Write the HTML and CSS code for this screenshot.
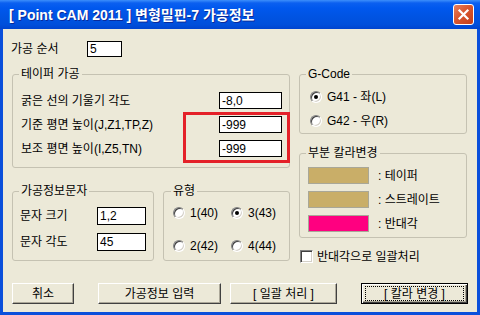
FILE: index.html
```html
<!DOCTYPE html>
<html lang="ko">
  <head>
    <meta charset="UTF-8" />
    <meta name="viewport" content="width=device-width, initial-scale=1.0" />
    <title>가공정보</title>
    <link rel="stylesheet" href="styles.css">
  </head>
  <body>
    <div class="window">
      <!-- 타이틀바 -->
      <div class="titlebar">
        <span class="title">[ Point CAM 2011 ] 변형밀핀-7 가공정보</span>
        <div class="close">
          <svg width="13" height="13" viewBox="0 0 13 13">
            <path d="M2.5 2.5 L10.5 10.5 M10.5 2.5 L2.5 10.5" stroke="#fff" stroke-width="2.2" stroke-linecap="square" />
          </svg>
        </div>
      </div>

      <div class="client">
        <div class="order-row">
          <span class="order-label">가공 순서</span>
          <div class="edit order-edit">5</div>
        </div>

        <div class="main">
          <div class="col-left">
            <fieldset class="grp taper">
              <legend>테이퍼 가공</legend>
              <div class="field-row">
                <span>굵은 선의 기울기 각도</span>
                <div class="edit taper-edit">-8,0</div>
              </div>
              <div class="field-row">
                <span>기준 평면 높이(J,Z1,TP,Z)</span>
                <div class="edit taper-edit">-999</div>
              </div>
              <div class="field-row">
                <span>보조 평면 높이(I,Z5,TN)</span>
                <div class="edit taper-edit">-999</div>
              </div>
            </fieldset>

            <div class="grp-row">
              <fieldset class="grp text-grp">
                <legend>가공정보문자</legend>
                <div class="text-row">
                  <span class="text-label">문자 크기</span>
                  <div class="edit text-edit">1,2</div>
                </div>
                <div class="text-row">
                  <span class="text-label">문자 각도</span>
                  <div class="edit text-edit">45</div>
                </div>
              </fieldset>

              <fieldset class="grp type-grp">
                <legend>유형</legend>
                <div class="type-grid">
                  <label class="opt"><span class="radio"></span>1(40)</label>
                  <label class="opt"><span class="radio on"></span>3(43)</label>
                  <label class="opt"><span class="radio"></span>2(42)</label>
                  <label class="opt"><span class="radio"></span>4(44)</label>
                </div>
              </fieldset>
            </div>
          </div>

          <div class="col-right">
            <fieldset class="grp gcode">
              <legend>G-Code</legend>
              <label class="opt"><span class="radio on"></span>G41 - 좌(L)</label>
              <label class="opt"><span class="radio"></span>G42 - 우(R)</label>
            </fieldset>

            <fieldset class="grp colors">
              <legend>부분 칼라변경</legend>
              <div class="color-row">
                <span class="swatch tan"></span><span>: 테이퍼</span>
              </div>
              <div class="color-row">
                <span class="swatch tan"></span><span>: 스트레이트</span>
              </div>
              <div class="color-row">
                <span class="swatch pink"></span><span>: 반대각</span>
              </div>
            </fieldset>

            <label class="check-row"><span class="checkbox"></span>반대각으로 일괄처리</label>
          </div>
        </div>

        <div class="buttons">
          <div class="btn btn-cancel">취소</div>
          <div class="btn btn-input">가공정보 입력</div>
          <div class="btn btn-batch">[ 일괄 처리 ]</div>
          <div class="btn btn-color default"><span class="focus">[ 칼라 변경 ]</span></div>
        </div>
      </div>

      <!-- 빨간 표시 박스 -->
      <div class="mark"></div>
    </div>
  </body>
</html>
```

FILE: styles.css
```css
* {
  margin: 0;
  padding: 0;
  box-sizing: border-box;
}

body {
  width: 480px;
  height: 315px;
  overflow: hidden;
  font-family: "Liberation Sans", "Noto Sans CJK KR", sans-serif;
  font-size: 12px;
  line-height: 14px;
  color: #000;
}

.window {
  position: relative;
  width: 480px;
  height: 315px;
  display: flex;
  flex-direction: column;
}

/* 타이틀바 */
.titlebar {
  height: 29px;
  display: flex;
  align-items: center;
  justify-content: space-between;
  padding: 0 6px 0 9px;
  background: linear-gradient(to bottom, #3d8ffb 0, #0b60f0 3px, #0058ee 8px, #0054e3 55%, #004fdb 85%, #0044cf 100%);
}

.title {
  font-size: 14px;
  font-weight: bold;
  color: #fff;
  text-shadow: 1px 1px #0a2a9a;
  white-space: nowrap;
}

.close {
  width: 21px;
  height: 21px;
  border: 1px solid #fff;
  border-radius: 3px;
  background: linear-gradient(135deg, #e8805e 0, #d9572f 45%, #c43e1a 100%);
  display: flex;
  align-items: center;
  justify-content: center;
}

/* 본문 */
.client {
  flex: 1;
  display: flex;
  flex-direction: column;
  background: #ece9d8;
  border: 3px solid #0a4fdb;
  border-top: 0;
  padding: 12px 0 8px 9px;
}

.order-row {
  display: flex;
  align-items: center;
  height: 16px;
  margin-left: -1px;
}

.order-label {
  width: 76px;
}

.edit {
  background: #fff;
  border: 1px solid #000;
  padding-left: 2px;
  display: flex;
  align-items: center;
}

.order-edit {
  width: 35px;
  height: 16px;
}

.main {
  display: flex;
  gap: 9px;
  margin-top: 10px;
}

.col-left {
  width: 278px;
}

.col-right {
  width: 168px;
}

/* 그룹박스 */
.grp {
  border: 1px solid #c5c2b2;
  border-radius: 3px;
  min-width: 0;
}

.grp legend {
  padding: 0 2px;
  line-height: 14px;
}

.taper {
  padding: 11px 7px 10px 8px;
  display: flex;
  flex-direction: column;
  gap: 7px;
}

.taper legend {
  margin-left: -2px;
}

.field-row {
  display: flex;
  justify-content: space-between;
  align-items: center;
  height: 17px;
}

.taper-edit {
  width: 63px;
  height: 17px;
}

.grp-row {
  display: flex;
  gap: 9px;
  margin-top: 16px;
}

.text-grp {
  width: 142px;
  padding: 9px 7px 9px 7px;
  display: flex;
  flex-direction: column;
  gap: 8px;
}

.text-grp legend {
  margin-left: -1px;
}

.text-row {
  display: flex;
  align-items: center;
  height: 18px;
}

.text-label {
  width: 77px;
}

.text-edit {
  width: 49px;
  height: 18px;
}

.type-grp {
  width: 127px;
  padding: 8px 4px 7px 9px;
}

.type-grp legend {
  margin-left: -2px;
}

.type-grid {
  display: grid;
  grid-template-columns: 58px 1fr;
  row-gap: 19px;
}

/* 라디오, 체크박스 */
.opt {
  display: flex;
  align-items: center;
  gap: 5px;
  height: 14px;
}

.radio {
  width: 12px;
  height: 12px;
  border-radius: 50%;
  border: 1px solid;
  border-color: #808080 #fff #fff #808080;
  box-shadow: inset 1px 1px #404040, inset -1px -1px #d4d0c8;
  background: #fff;
  display: flex;
  align-items: center;
  justify-content: center;
}

.radio.on::after {
  content: "";
  width: 4px;
  height: 4px;
  border-radius: 50%;
  background: #000;
}

.gcode {
  padding: 8px 4px 4px 10px;
  display: flex;
  flex-direction: column;
  gap: 8px;
}

.gcode legend {
  margin-left: -4px;
}

.gcode .opt {
  height: 16px;
}

.colors {
  margin-top: 12px;
  padding: 7px 4px 5px 8px;
  display: flex;
  flex-direction: column;
  gap: 7px;
}

.colors legend {
  margin-left: -2px;
}

.color-row {
  display: flex;
  align-items: center;
  gap: 9px;
  height: 17px;
}

.swatch {
  width: 61px;
  height: 17px;
  border: 1px solid #a9a797;
}

.tan {
  background: #c9ae68;
}

.pink {
  background: #ff0080;
}

.check-row {
  display: flex;
  align-items: center;
  gap: 4px;
  margin: 12px 0 0 1px;
  height: 13px;
}

.checkbox {
  width: 13px;
  height: 13px;
  border: 1px solid;
  border-color: #808080 #fff #fff #808080;
  box-shadow: inset 1px 1px #404040, inset -1px -1px #d4d0c8;
  background: #fff;
}

/* 하단 버튼 */
.buttons {
  margin-top: auto;
  display: flex;
  height: 21px;
}

.btn {
  height: 21px;
  display: flex;
  align-items: center;
  justify-content: center;
  background: #ece9d8;
  border: 1px solid;
  border-color: #fff #404040 #404040 #fff;
  box-shadow: inset -1px -1px #aca899;
}

.btn-cancel {
  width: 62px;
}

.btn-input {
  width: 123px;
  margin-left: 24px;
}

.btn-batch {
  width: 107px;
  margin-left: 9px;
}

.btn-color {
  width: 107px;
  margin-left: 24px;
}

.btn.default {
  border: 1px solid #000;
  box-shadow: inset 1px 1px #fff, inset -1px -1px #404040, inset -2px -2px #aca899;
}

.focus {
  width: 99px;
  height: 15px;
  border: 1px dotted #000;
  display: flex;
  align-items: center;
  justify-content: center;
}

/* 강조 표시 */
.mark {
  position: absolute;
  left: 183px;
  top: 112px;
  width: 107px;
  height: 51px;
  border: 3px solid #e42129;
}
```
